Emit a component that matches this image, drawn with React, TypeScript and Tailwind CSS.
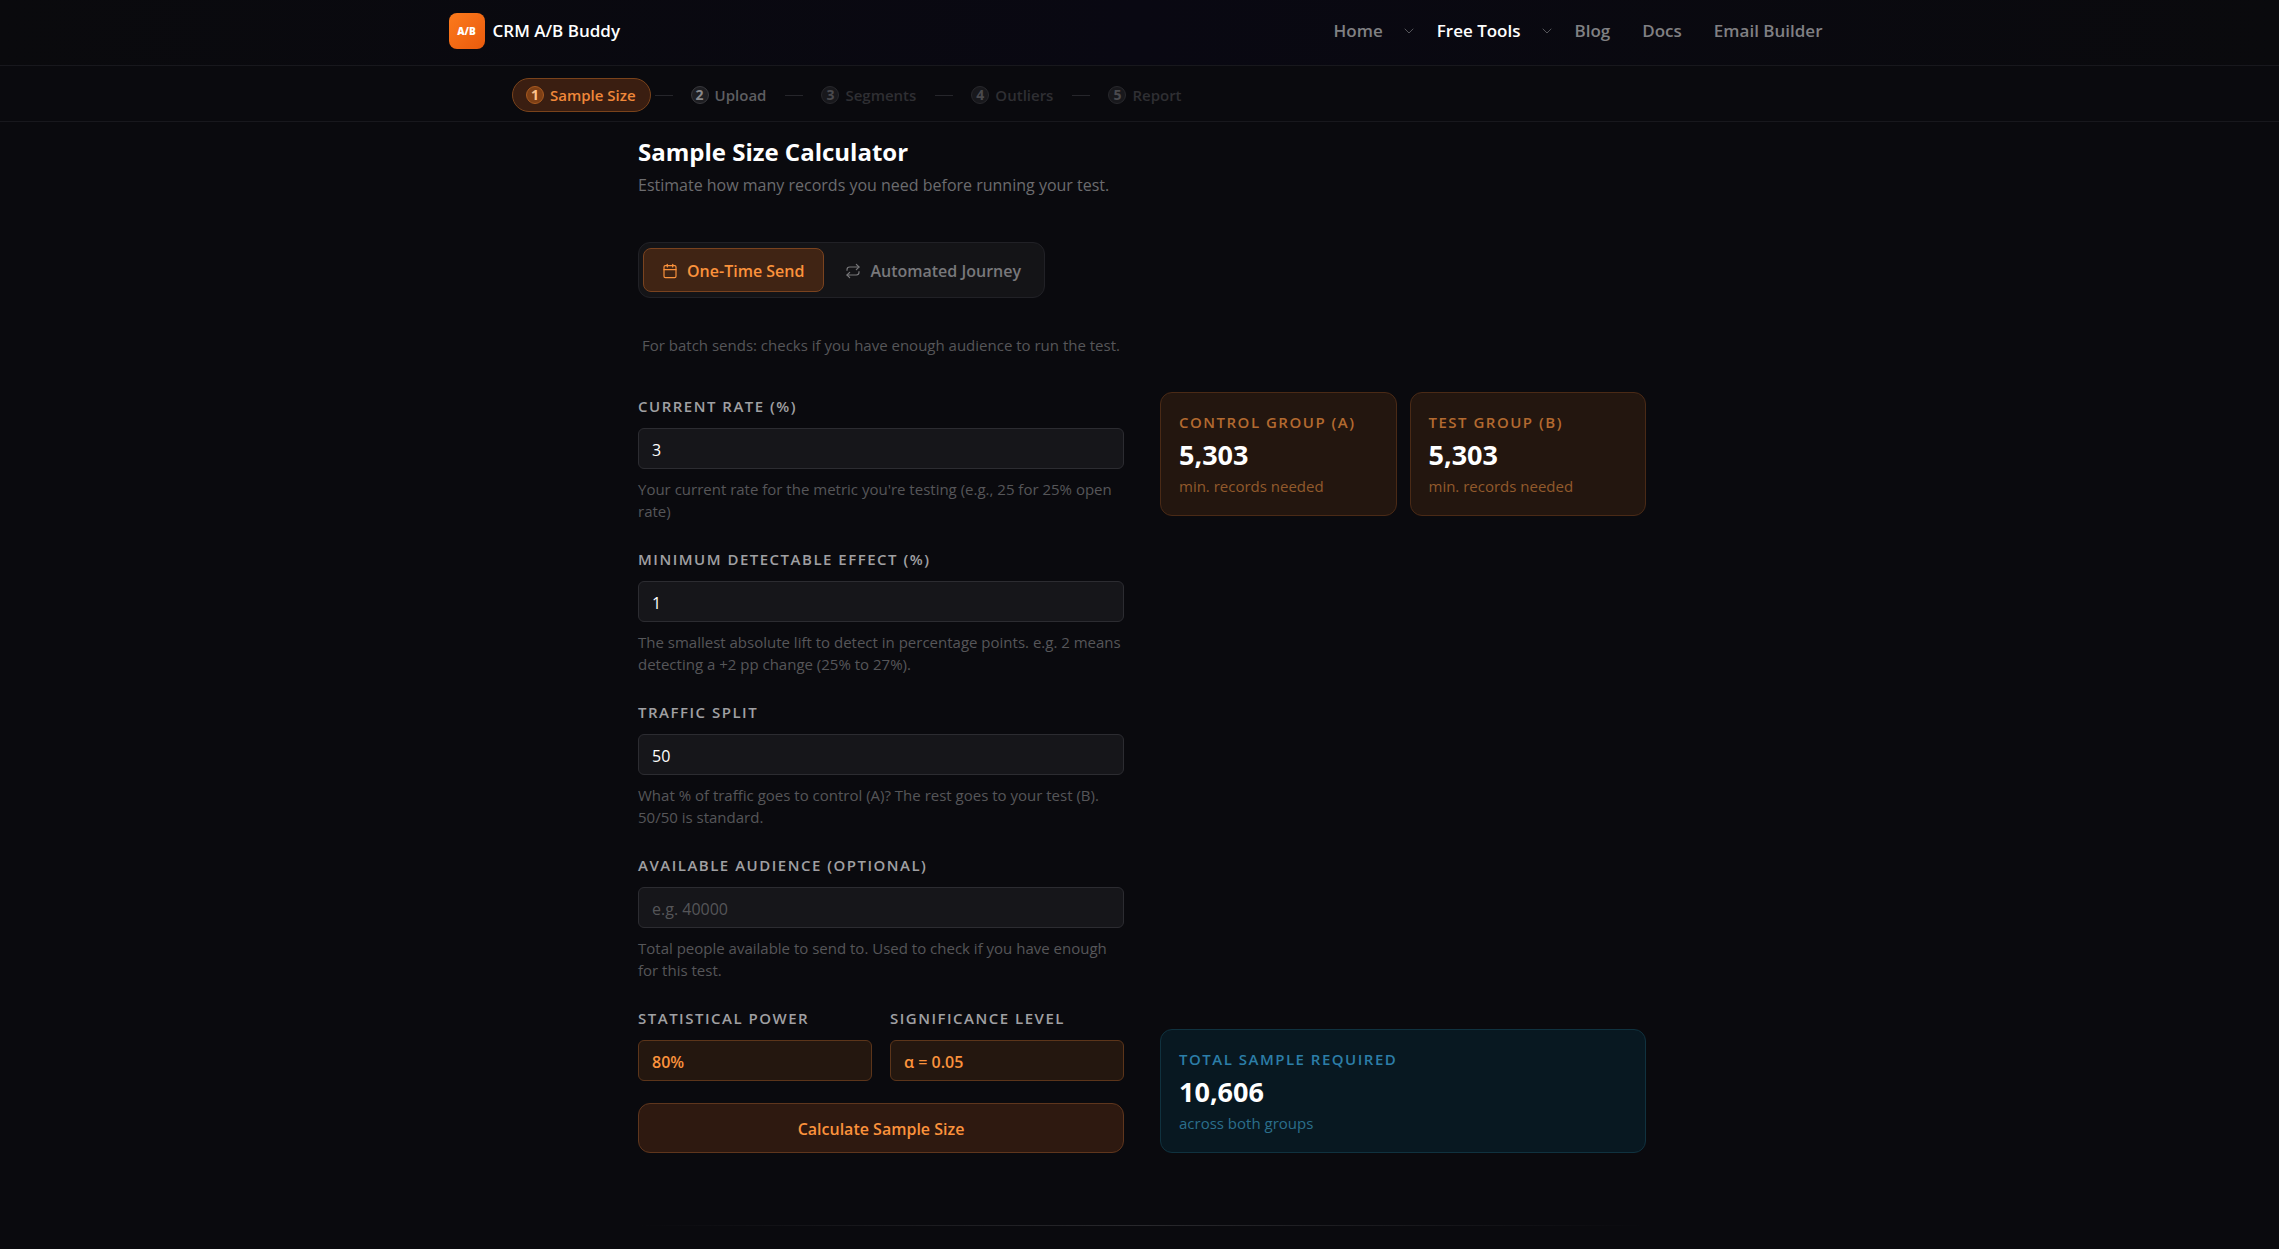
import { Fragment, useState } from "react";
import type { ReactNode } from "react";
import { Calendar, ChevronDown, Repeat } from "lucide-react";

const steps = ["Sample Size", "Upload", "Segments", "Outliers", "Report"];

function Header() {
  return (
    <header className="border-b border-[#18181d] bg-linear-to-r from-[#0a0a0d] via-[#090812] to-[#0a0a0d]">
      <div className="mx-auto flex max-w-[1382px] items-center justify-between pt-[13px] pb-4">
        <a href="#" className="flex items-center gap-2">
          <span className="flex size-9 items-center justify-center rounded-lg bg-linear-to-br from-[#fb7a1c] to-[#ea5a0c] text-[10px] leading-3 font-extrabold">
            A/B
          </span>
          <span className="text-[17px] leading-6 font-semibold">CRM A/B Buddy</span>
        </a>
        <nav className="flex items-center text-[17px] leading-6 font-semibold text-[#808083]">
          <a href="#">Home</a>
          <button type="button" aria-label="Home menu" className="px-[18px] text-[#55555a]">
            <ChevronDown className="size-4" strokeWidth={1.5} />
          </button>
          <a href="#" className="ml-0.5 text-white">Free Tools</a>
          <button type="button" aria-label="Free Tools menu" className="px-[18px] text-[#55555a]">
            <ChevronDown className="size-4" strokeWidth={1.5} />
          </button>
          <div className="mr-2 ml-0.5 flex gap-8">
            <a href="#">Blog</a>
            <a href="#">Docs</a>
            <a href="#">Email Builder</a>
          </div>
        </nav>
      </div>
    </header>
  );
}

const stepTone = [
  "border-[#7a431b] bg-[#3a1e11] text-[#f0883a]",
  "border-transparent text-[#5e5e61]",
  "border-transparent text-[#2f2f33]",
  "border-transparent text-[#2f2f33]",
  "border-transparent text-[#2f2f33]",
];
const badgeTone = [
  "border-[#a85a20] bg-[#7d3f15] text-[#ffc48c]",
  "border-[#38383c] bg-[#1e1e22] text-[#88888b]",
  "border-[#28282c] bg-[#18181c] text-[#4a4a4e]",
  "border-[#28282c] bg-[#18181c] text-[#4a4a4e]",
  "border-[#28282c] bg-[#18181c] text-[#4a4a4e]",
];

function Steps() {
  return (
    <div className="border-b border-[#18181d] pt-3 pb-[9px]">
      <ol className="mx-auto flex max-w-[1255px] items-center gap-1">
        {steps.map((label, i) => (
          <Fragment key={label}>
            {i > 0 && <li aria-hidden className="h-px w-[18px] bg-[#26262b]" />}
            <li>
              <button
                type="button"
                aria-current={i === 0 ? "step" : undefined}
                className={`flex h-[34px] items-center gap-1.5 rounded-full border pr-[14px] pl-[13px] text-[15px] leading-5 font-semibold ${stepTone[i]}`}
              >
                <span className={`flex size-[18px] items-center justify-center rounded-full border text-sm leading-4 font-bold ${badgeTone[i]}`}>
                  {i + 1}
                </span>
                {label}
              </button>
            </li>
          </Fragment>
        ))}
      </ol>
    </div>
  );
}

const labelClass = "block text-[15px] leading-7 font-semibold tracking-widest uppercase";

function Field(props: { id: string; label: string; help: string; value?: string; placeholder?: string }) {
  return (
    <div>
      <label htmlFor={props.id} className={`${labelClass} text-[#a0a0a3]`}>{props.label}</label>
      <input
        id={props.id}
        type="text"
        inputMode="numeric"
        defaultValue={props.value}
        placeholder={props.placeholder}
        className="mt-2 block h-[41px] w-full rounded-md border border-[#2c2c31] bg-[#16161a] px-[13px] pt-0.5 text-base text-white outline-none placeholder:text-[#555558]"
      />
      <p className="mt-[9px] text-[15px] leading-[22px] text-[#565659]">{props.help}</p>
    </div>
  );
}

function FixedField(props: { id: string; label: string; value: string }) {
  return (
    <div className="min-w-0">
      <label htmlFor={props.id} className={`${labelClass} whitespace-nowrap text-[#a0a0a3]`}>{props.label}</label>
      <input
        id={props.id}
        type="text"
        readOnly
        defaultValue={props.value}
        className="mt-2 block h-[41px] w-full rounded-md border border-[#5c351a] bg-[#24170f] px-[13px] pt-0.5 text-base font-semibold text-[#fb923c] outline-none"
      />
    </div>
  );
}

function ResultCard(props: { label: string; value: string; note: string; tone?: "blue" }) {
  const blue = props.tone === "blue";
  return (
    <section className={`rounded-xl border p-[18px] ${blue ? "border-[#10323f] bg-[#081821]" : "border-[#4a2a16] bg-[#23160f]"}`}>
      <h2 className={`text-[15px] leading-[22px] font-semibold tracking-widest whitespace-nowrap uppercase ${blue ? "text-[#2c7ea8]" : "text-[#b36a30]"}`}>
        {props.label}
      </h2>
      <p className="mt-1 text-[27px] leading-9 font-bold">{props.value}</p>
      <p className={`mt-0.5 text-[15px] leading-[22px] ${blue ? "text-[#2b6f8c]" : "text-[#925a2c]"}`}>{props.note}</p>
    </section>
  );
}

function ModeButton(props: { active: boolean; onClick: () => void; icon: ReactNode; children: ReactNode }) {
  return (
    <button
      type="button"
      aria-pressed={props.active}
      onClick={props.onClick}
      className={`flex h-11 items-center gap-[9px] rounded-lg border pt-0.5 pr-[19px] pl-[18px] text-base font-semibold ${
        props.active ? "border-[#7a431f] bg-[#402414] text-[#fb923c]" : "border-transparent text-[#78787b]"
      }`}
    >
      {props.icon}
      {props.children}
    </button>
  );
}

export default function App() {
  const [mode, setMode] = useState<"once" | "journey">("once");
  return (
    <div className="min-h-screen bg-[#0a0a0e] font-['Open_Sans','Noto_Sans',sans-serif] text-white">
      <Header />
      <Steps />
      <div className="pl-[5px]">
        <main className="mx-auto max-w-[1008px] pt-[14px]">
          <h1 className="text-2xl leading-8 font-bold">Sample Size Calculator</h1>
          <p className="mt-[5px] text-base leading-6 text-[#6c6c6f]">
            Estimate how many records you need before running your test.
          </p>

          <div className="mt-[45px] flex w-fit gap-0.5 rounded-xl border border-[#212126] bg-[#141417] py-[5px] pr-[3px] pl-1">
            <ModeButton active={mode === "once"} onClick={() => setMode("once")} icon={<Calendar className="size-4" strokeWidth={1.75} />}>
              One-Time Send
            </ModeButton>
            <ModeButton active={mode === "journey"} onClick={() => setMode("journey")} icon={<Repeat className="size-4" strokeWidth={1.75} />}>
              Automated Journey
            </ModeButton>
          </div>
          <p className="mt-9 pl-1 text-[15px] leading-[22px] text-[#565659]">
            For batch sends: checks if you have enough audience to run the test.
          </p>

          <div className="mt-9 grid grid-cols-2 gap-9">
            <form onSubmit={(e) => e.preventDefault()}>
              <div className="flex flex-col gap-[23px]">
                <Field
                  id="rate"
                  label="Current rate (%)"
                  value="3"
                  help="Your current rate for the metric you're testing (e.g., 25 for 25% open rate)"
                />
                <Field
                  id="mde"
                  label="Minimum detectable effect (%)"
                  value="1"
                  help="The smallest absolute lift to detect in percentage points. e.g. 2 means detecting a +2 pp change (25% to 27%)."
                />
                <Field
                  id="split"
                  label="Traffic split"
                  value="50"
                  help="What % of traffic goes to control (A)? The rest goes to your test (B). 50/50 is standard."
                />
                <Field
                  id="audience"
                  label="Available audience (optional)"
                  placeholder="e.g. 40000"
                  help="Total people available to send to. Used to check if you have enough for this test."
                />
                <div className="grid grid-cols-2 gap-[18px]">
                  <FixedField id="power" label="Statistical power" value="80%" />
                  <FixedField id="alpha" label="Significance level" value="α = 0.05" />
                </div>
              </div>
              <button
                type="submit"
                className="mt-[22px] h-[50px] w-full rounded-xl border border-[#5f361d] bg-[#2e1910] pt-0.5 text-base font-semibold text-[#fb923c]"
              >
                Calculate Sample Size
              </button>
            </form>

            <div className="flex flex-col justify-between">
              <div className="grid grid-cols-2 gap-[13px]">
                <ResultCard label="Control group (A)" value="5,303" note="min. records needed" />
                <ResultCard label="Test group (B)" value="5,303" note="min. records needed" />
              </div>
              <ResultCard tone="blue" label="Total sample required" value="10,606" note="across both groups" />
            </div>
          </div>
          <hr className="mt-[72px] h-px border-0 bg-linear-to-r from-transparent via-[#28282c] to-transparent" />
        </main>
      </div>
    </div>
  );
}
